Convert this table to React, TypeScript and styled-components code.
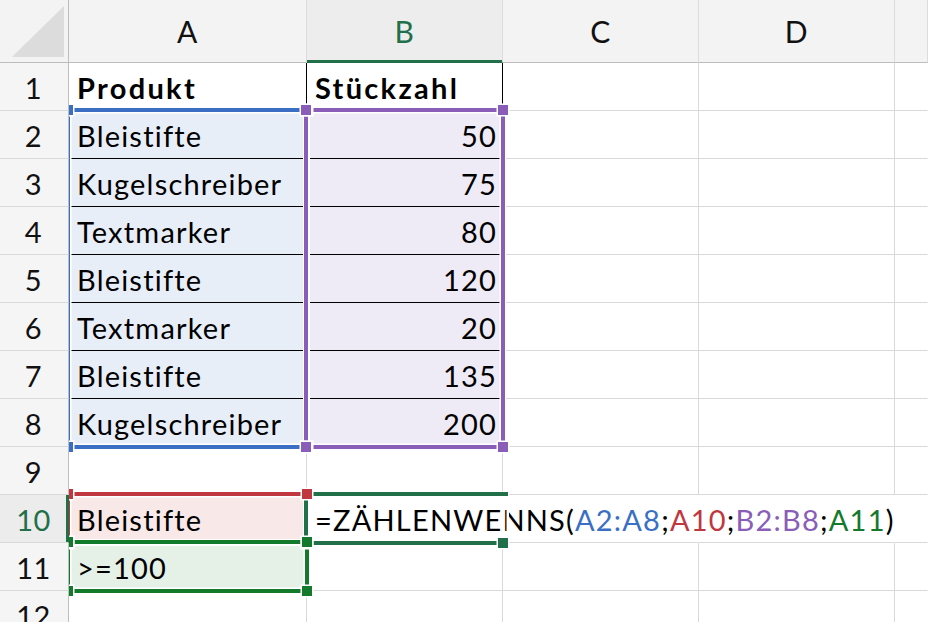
import React from 'react'
import styled, { createGlobalStyle, css } from 'styled-components'

const GlobalStyle = createGlobalStyle`
  html, body { margin: 0; padding: 0; background: #fff; }
  body { width: 928px; height: 622px; overflow: hidden; }
`

const FONT = `Lato, 'Liberation Sans', sans-serif`
const GRID = '#d9d9d9'
const HEAD_EDGE = '#bdbdbd'
const ACTIVE = '#22704a'

const COLORS = {
  blue: '#3a6fc4',
  purple: '#8a5db8',
  red: '#c1373f',
  green: '#137a2c',
}

const FILLS = {
  blue: '#e8eef8',
  purple: '#efebf6',
  red: '#f9e8e8',
  green: '#e5f0e6',
}

// E is wider than the window, so its letter falls outside the picture
const COLUMNS = ['A', 'B', 'C', 'D', '']

const Sheet = styled.div`
  position: relative;
  display: grid;
  grid-template-columns: 69px 238px 196px 196px 196px 1fr;
  grid-template-rows: 63px repeat(12, 48px);
  width: 928px;
  height: 622px;
  overflow: hidden;
  background: #fff;
  font-family: ${FONT};
  font-size: 29px;
  color: #000;
`

const Corner = styled.div`
  grid-column: 1;
  grid-row: 1;
  position: relative;
  z-index: 5;
  display: flex;
  justify-content: flex-end;
  align-items: flex-end;
  padding: 0 4px 5px 0;
  box-sizing: border-box;
  background: #f3f3f3;
  border-right: 1px solid ${HEAD_EDGE};
  border-bottom: 1px solid ${HEAD_EDGE};
`

const ColumnHeader = styled.div<{ $c: number; $active?: boolean }>`
  grid-column: ${p => p.$c};
  grid-row: 1;
  position: relative;
  z-index: 5;
  display: flex;
  align-items: center;
  justify-content: center;
  padding-bottom: 1px;
  box-sizing: border-box;
  font-size: 30px;
  letter-spacing: 0.5px;
  background: ${p => (p.$active ? '#ededed' : '#f3f3f3')};
  border-right: 1px solid #dcdcdc;
  border-bottom: 1px solid ${HEAD_EDGE};
  color: ${p => (p.$active ? ACTIVE : '#111')};
  ${p =>
    p.$active &&
    css`
      border-bottom-color: ${ACTIVE};
      box-shadow: inset 0 -2px 0 ${ACTIVE};
    `}
`

const RowHeader = styled.div<{ $r: number; $active?: boolean }>`
  grid-column: 1;
  grid-row: ${p => p.$r};
  position: relative;
  z-index: 5;
  display: flex;
  align-items: flex-end;
  justify-content: center;
  padding: 0 1px 8px 0;
  box-sizing: border-box;
  line-height: 1;
  letter-spacing: 0.5px;
  background: ${p => (p.$active ? '#ececec' : '#f5f5f5')};
  border-right: 1px solid ${HEAD_EDGE};
  border-bottom: 1px solid ${GRID};
  color: ${p => (p.$active ? ACTIVE : '#111')};
  ${p =>
    p.$active &&
    css`
      border-right-color: ${ACTIVE};
      box-shadow: inset -2px 0 0 ${ACTIVE};
    `}
`

type Edge = 'grid' | 'black' | 'none'

const Cell = styled.div<{
  $c: number
  $r: number
  $align?: 'left' | 'right'
  $bold?: boolean
  $fill?: string
  $rule?: boolean
  $edge?: Edge
}>`
  grid-column: ${p => p.$c};
  grid-row: ${p => p.$r};
  display: flex;
  align-items: flex-end;
  justify-content: ${p => (p.$align === 'right' ? 'flex-end' : 'flex-start')};
  padding: 0 5px 8px 8px;
  box-sizing: border-box;
  min-width: 0;
  line-height: 1;
  white-space: nowrap;
  letter-spacing: ${p => (p.$bold ? '2.3px' : '1.2px')};
  font-weight: ${p => (p.$bold ? 700 : 400)};
  background: ${p => p.$fill ?? 'transparent'};
  border-bottom: 1px solid ${p => (p.$rule ? '#000' : GRID)};
  border-right: 1px solid
    ${p => (p.$edge === 'black' ? '#000' : p.$edge === 'none' ? 'transparent' : GRID)};
`

const RangeBox = styled.div<{ $c: string; $r: string; $color: string; $open?: boolean }>`
  grid-column: ${p => p.$c};
  grid-row: ${p => p.$r};
  position: relative;
  margin: -3px ${p => (p.$open ? '-5px' : '-2px')} -2px -3px;
  border: 4px solid ${p => p.$color};
  ${p =>
    p.$open &&
    css`
      border-right: none;
    `}
  box-shadow: 0 0 0 1px #fff, inset 0 0 0 1.5px #fff;
  pointer-events: none;
`

const Handle = styled.span<{ $color: string; $x: 'left' | 'right'; $y: 'top' | 'bottom'; $flush?: boolean }>`
  position: absolute;
  z-index: 3;
  width: 10px;
  height: 10px;
  background: ${p => p.$color};
  box-shadow: 0 0 0 1.5px #fff;
  ${p => p.$x}: ${p => (p.$flush ? '0' : '-7px')};
  ${p => p.$y}: -7px;
`

const Ref = styled.span<{ $color?: string }>`
  color: ${p => p.$color ?? '#000'};
`

type Row = { a?: string; b?: React.ReactNode; bold?: boolean; kind?: 'table' | 'criteria' | 'formula' | 'min' }

const ROWS: Row[] = [
  { a: 'Produkt', b: 'Stückzahl', bold: true },
  { a: 'Bleistifte', b: '50', kind: 'table' },
  { a: 'Kugelschreiber', b: '75', kind: 'table' },
  { a: 'Textmarker', b: '80', kind: 'table' },
  { a: 'Bleistifte', b: '120', kind: 'table' },
  { a: 'Textmarker', b: '20', kind: 'table' },
  { a: 'Bleistifte', b: '135', kind: 'table' },
  { a: 'Kugelschreiber', b: '200', kind: 'table' },
  {},
  {
    a: 'Bleistifte',
    kind: 'formula',
    b: (
      <>
        =ZÄHLENWENNS(<Ref $color={COLORS.blue}>A2:A8</Ref>;<Ref $color={COLORS.red}>A10</Ref>;
        <Ref $color={COLORS.purple}>B2:B8</Ref>;<Ref $color={COLORS.green}>A11</Ref>)
      </>
    ),
  },
  { a: '>=100', kind: 'min' },
  {},
]

const CornerTriangle = () => (
  <svg width="52" height="51" viewBox="0 0 52 51">
    <polygon points="0,51 52,51 52,0" fill="#dcdcdc" />
  </svg>
)

const Corners = ({ color }: { color: string }) => (
  <>
    <Handle $color={color} $x="left" $y="top" />
    <Handle $color={color} $x="right" $y="top" />
    <Handle $color={color} $x="left" $y="bottom" />
    <Handle $color={color} $x="right" $y="bottom" />
  </>
)

const renderRow = (row: Row, i: number) => {
  const r = i + 2
  const isTable = row.kind === 'table'
  const isFormula = row.kind === 'formula'
  const fillA = isTable
    ? FILLS.blue
    : isFormula
      ? FILLS.red
      : row.kind === 'min'
        ? FILLS.green
        : undefined

  return (
    <React.Fragment key={r}>
      <RowHeader $r={r} $active={isFormula}>
        {i + 1}
      </RowHeader>
      <Cell $c={2} $r={r} $bold={row.bold} $fill={fillA} $rule={isTable} $edge={row.bold ? 'black' : 'grid'}>
        {row.a}
      </Cell>
      <Cell
        $c={3}
        $r={r}
        $bold={row.bold}
        $align={isTable ? 'right' : 'left'}
        $fill={isTable ? FILLS.purple : undefined}
        $rule={isTable}
        $edge={row.bold ? 'black' : isFormula ? 'none' : 'grid'}
      >
        {row.b}
      </Cell>
      <Cell $c={4} $r={r} $edge={isFormula ? 'none' : 'grid'} />
      <Cell $c={5} $r={r} $edge={isFormula ? 'none' : 'grid'} />
      <Cell $c={6} $r={r} $edge="none" />
    </React.Fragment>
  )
}

const App = () => (
  <>
    <GlobalStyle />
    <Sheet>
      <Corner>
        <CornerTriangle />
      </Corner>
      {COLUMNS.map((col, i) => (
        <ColumnHeader key={i} $c={i + 2} $active={col === 'B'}>
          {col}
        </ColumnHeader>
      ))}
      {ROWS.map(renderRow)}

      <RangeBox $c="2" $r="3 / 10" $color={COLORS.blue}>
        <Corners color={COLORS.blue} />
      </RangeBox>
      <RangeBox $c="3" $r="3 / 10" $color={COLORS.purple}>
        <Corners color={COLORS.purple} />
      </RangeBox>
      <RangeBox $c="2" $r="11" $color={COLORS.red}>
        <Corners color={COLORS.red} />
      </RangeBox>
      <RangeBox $c="3" $r="11" $color={ACTIVE} $open>
        <Handle $color={ACTIVE} $x="right" $y="bottom" $flush />
      </RangeBox>
      <RangeBox $c="2" $r="12" $color={COLORS.green}>
        <Corners color={COLORS.green} />
      </RangeBox>
    </Sheet>
  </>
)

export default App
